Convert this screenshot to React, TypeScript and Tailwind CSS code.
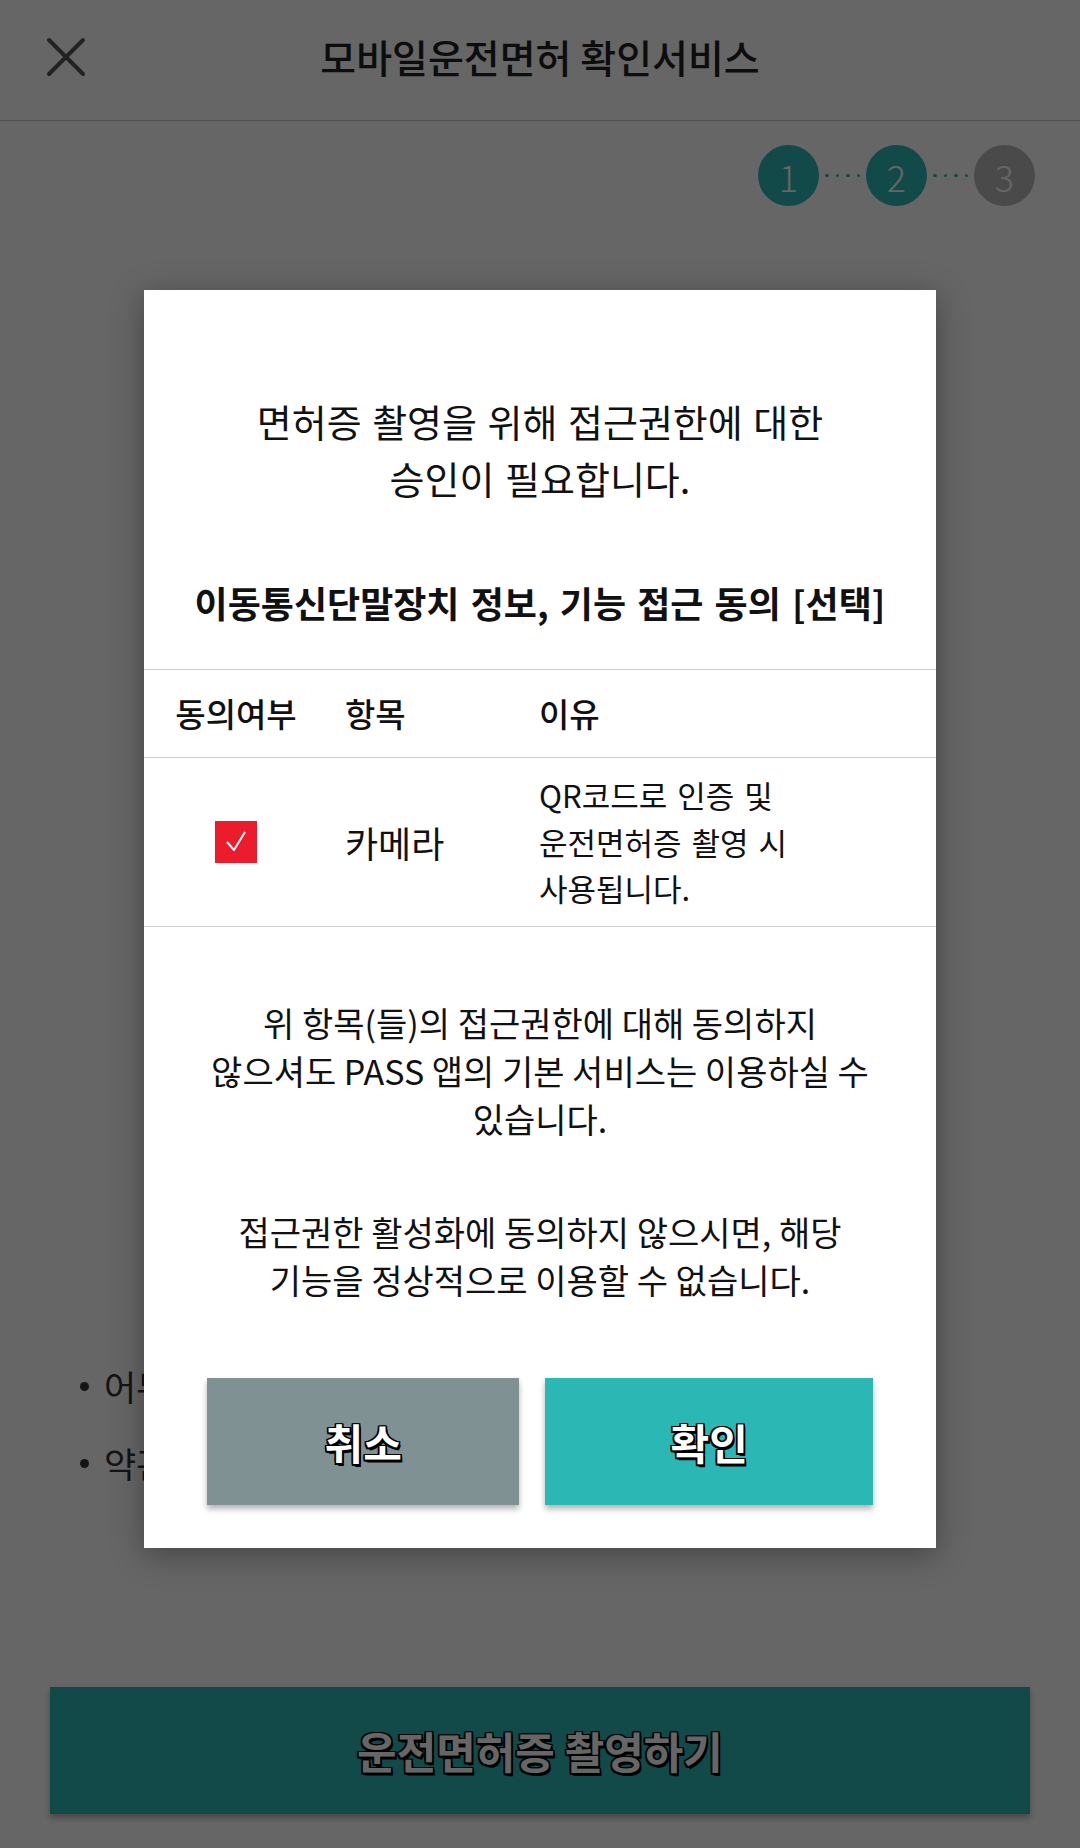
import { Fragment } from "react";

const outline =
  "[text-shadow:-1.5px_-1.5px_0_#000,1.5px_-1.5px_0_#000,-1.5px_1.5px_0_#000,1.5px_1.5px_0_#000,0_-1.5px_0_#000,0_1.5px_0_#000,-1.5px_0_0_#000,1.5px_0_0_#000,2px_2.5px_0_#000]";

const Dots = () => (
  <div className="flex w-[47px] items-center justify-center gap-[7px]">
    {[0, 1, 2, 3].map((i) => (
      <span key={i} className="h-[3.5px] w-[3.5px] rounded-full bg-[#2bb8b4]" />
    ))}
  </div>
);

const Step = ({ n, active }: { n: number; active: boolean }) => (
  <div
    className={
      active
        ? "flex h-[61px] w-[61px] items-center justify-center rounded-full bg-[#2bb8b4] text-[36px] font-light text-white"
        : "flex h-[61px] w-[61px] items-center justify-center rounded-full bg-[#b9b9b9] text-[36px] font-light text-white"
    }
  >
    {n}
  </div>
);

const tips = ["어두운 곳은 피해주세요.", "약관 확인 필수"];

export default function App() {
  return (
    <div className="relative flex h-[1848px] w-[1080px] flex-col overflow-hidden bg-white font-['Noto_Sans_CJK_KR','Noto_Sans',sans-serif] text-[#222]">
      {/* header */}
      <header className="h-[121px] border-b border-[#cccccc]">
        <div className="relative flex h-[112px] items-center justify-center">
          <button className="absolute left-[46px] top-[37px] h-[40px] w-[40px]">
            <svg viewBox="0 0 40 40" className="h-full w-full" fill="none" stroke="#555" strokeWidth="4" strokeLinecap="round">
              <path d="M3 3L37 37M37 3L3 37" />
            </svg>
          </button>
          <h1 className="text-[39px] font-medium leading-none text-[#222]">모바일운전면허 확인서비스</h1>
        </div>
      </header>

      {/* steps */}
      <div className="flex items-center justify-end pr-[45px] pt-[24px]">
        <Step n={1} active />
        <Dots />
        <Step n={2} active />
        <Dots />
        <Step n={3} active={false} />
      </div>

      <div className="flex-1" />

      <ul className="flex flex-col gap-[27px] pl-[80px] text-[35px] leading-[50px] text-[#333]">
        {tips.map((t) => (
          <li key={t} className="flex items-center gap-[15px] whitespace-nowrap">
            <span className="h-[9px] w-[9px] shrink-0 rounded-full bg-[#333]" />
            {t}
          </li>
        ))}
      </ul>

      <button
        className={`mx-[50px] mb-[34px] mt-[199px] flex h-[127px] items-center justify-center bg-[#2bb8b4] text-[43px] font-bold text-white shadow-[0_4px_6px_rgba(0,0,0,0.3)] ${outline}`}
      >
        운전면허증 촬영하기
      </button>

      {/* dim + permission dialog */}
      <div className="absolute inset-0 flex items-start justify-center bg-black/60 pt-[290px]">
        <div className="flex w-[792px] flex-col bg-white pb-[43px] pt-[102px] text-[#111] shadow-[0_6px_30px_rgba(0,0,0,0.35)]">
          <p className="text-center text-[38px] leading-[57px] [word-spacing:2px]">
            면허증 촬영을 위해 접근권한에 대한
            <br />
            승인이 필요합니다.
          </p>
          <h2 className="mt-[72px] text-center text-[36px] font-bold leading-[48px] [word-spacing:3px]">
            이동통신단말장치 정보, 기능 접근 동의 [선택]
          </h2>

          <div className="mt-[43px] border-t border-[#d0d0d0]">
            <div className="grid h-[88px] grid-cols-[184px_194px_1fr] items-center border-b border-[#d0d0d0] text-[33px] font-medium">
              <span className="text-center">동의여부</span>
              <span className="pl-[17px]">항목</span>
              <span className="pl-[17px]">이유</span>
            </div>
            <div className="grid h-[169px] grid-cols-[184px_194px_1fr] items-center border-b border-[#d0d0d0]">
              <div className="flex justify-center">
                <span className="flex h-[42px] w-[42px] items-center justify-center bg-[#ec1c2d]">
                  <svg viewBox="0 0 42 42" className="h-[42px] w-[42px]" fill="none" stroke="#fff" strokeWidth="2" strokeLinejoin="round">
                    <path d="M12 21L19 29L30 11" />
                  </svg>
                </span>
              </div>
              <span className="pl-[17px] text-[36px]">카메라</span>
              <p className="pl-[17px] text-[31px] leading-[46.5px] [word-spacing:3px]">
                QR코드로 인증 및
                <br />
                운전면허증 촬영 시
                <br />
                사용됩니다.
              </p>
            </div>
          </div>

          <div className="mt-[72px] flex flex-col gap-[65px] text-center text-[34px] leading-[48px]">
            <p>
              위 항목(들)의 접근권한에 대해 동의하지
              <br />
              않으셔도 PASS 앱의 기본 서비스는 이용하실 수
              <br />
              있습니다.
            </p>
            <p>
              {["접근권한 활성화에 동의하지 않으시면, 해당", "기능을 정상적으로 이용할 수 없습니다."].map((l, i) => (
                <Fragment key={l}>
                  {i > 0 && <br />}
                  {l}
                </Fragment>
              ))}
            </p>
          </div>

          <div className="mt-[74px] grid grid-cols-[312fr_327fr] gap-[26px] px-[63px]">
            <button
              className={`flex h-[127px] items-center justify-center bg-[#7f9193] text-[42px] font-bold text-white shadow-[0_4px_6px_rgba(0,0,0,0.3)] ${outline}`}
            >
              취소
            </button>
            <button
              className={`flex h-[127px] items-center justify-center bg-[#2bb8b4] text-[42px] font-bold text-white shadow-[0_4px_6px_rgba(0,0,0,0.3)] ${outline}`}
            >
              확인
            </button>
          </div>
        </div>
      </div>
    </div>
  );
}
